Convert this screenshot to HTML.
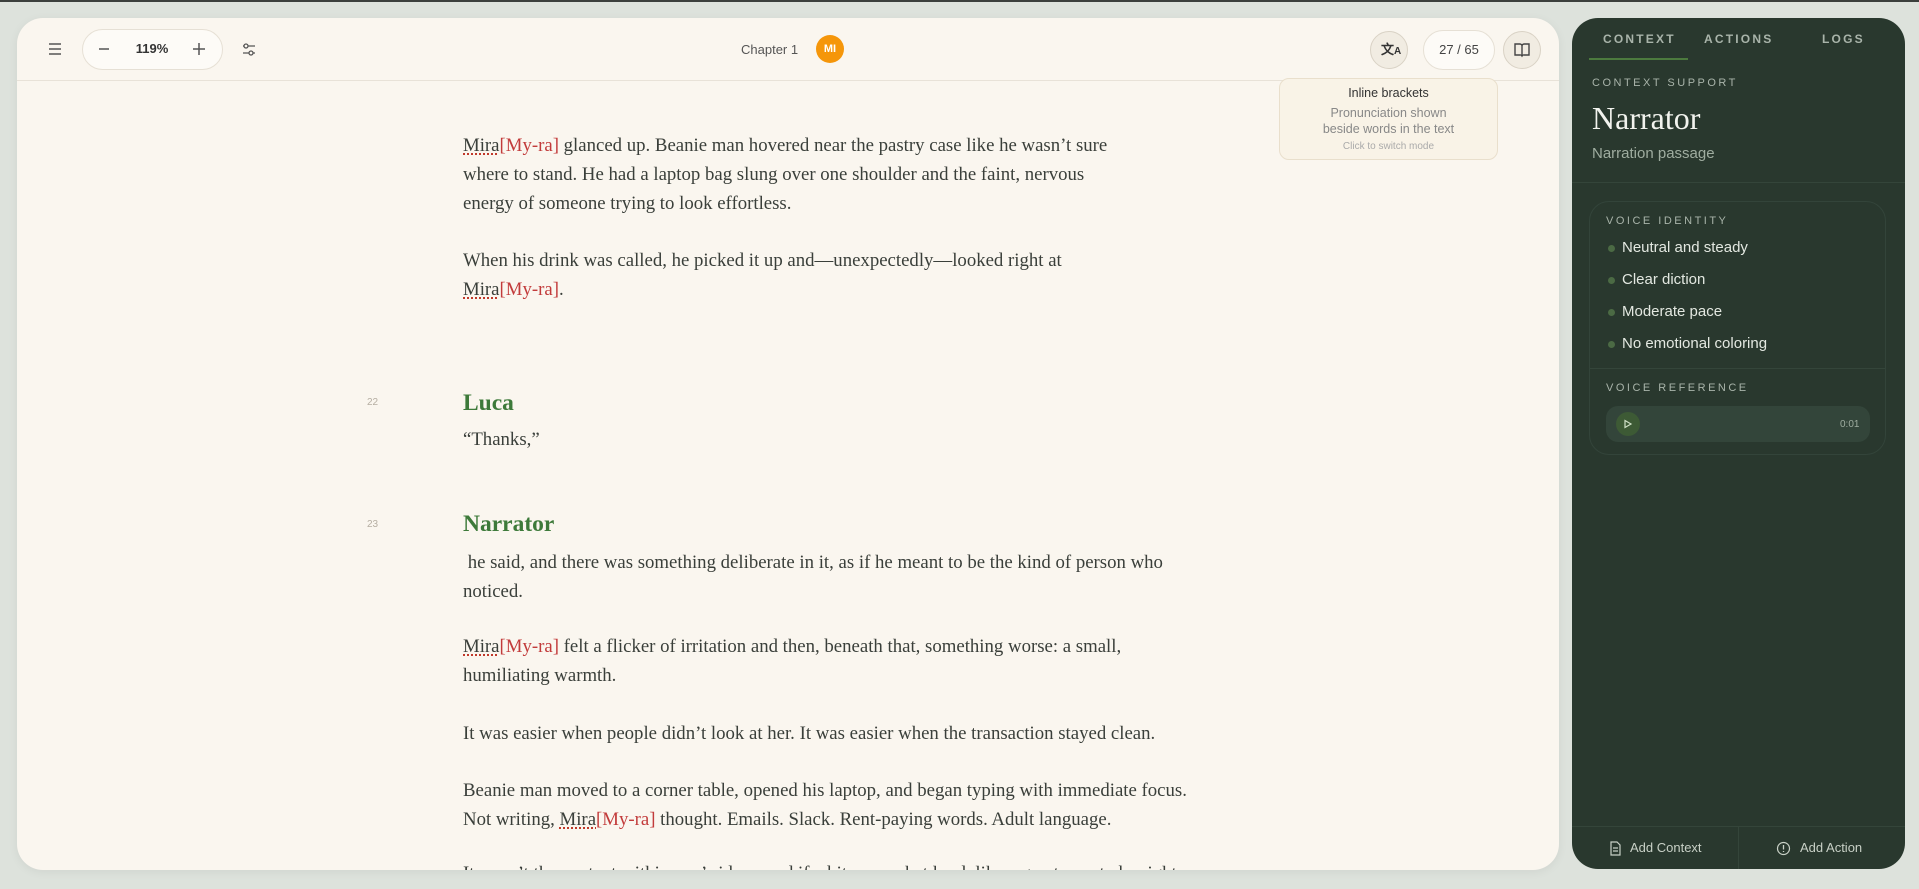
<!DOCTYPE html>
<html><head><meta charset="utf-8"><style>
*{box-sizing:border-box;margin:0;padding:0}
body{width:1919px;height:889px;overflow:hidden;background:#dde2dc;font-family:"Liberation Sans",sans-serif;position:relative}
.top{position:absolute;left:0;top:0;width:1919px;height:2px;background:#3b3f3c}
.card{position:absolute;left:17px;top:18px;width:1542px;height:852px;background:#faf6ef;border-radius:26px;overflow:hidden;box-shadow:0 2px 10px rgba(0,0,0,.06)}
.tb{position:absolute;left:0;top:0;width:100%;height:63px;border-bottom:1px solid #e8e2d8}
.abs{position:absolute}
.pill{position:absolute;border:1px solid #e6e0d5;background:#fdfbf7;border-radius:22px}
.circ{position:absolute;border:1px solid #d9d2c5;background:#f1ece2;border-radius:50%}
.p{position:absolute;left:446px;font-family:"Liberation Serif",serif;font-size:18.8px;line-height:28.8px;color:#3a3f3a;white-space:nowrap}
.m{text-decoration:underline dotted #c0392b;text-underline-offset:3px}
.r{color:#c23b3b}
.h{position:absolute;left:446px;font-family:"Liberation Serif",serif;font-weight:bold;font-size:23.5px;color:#3d7a3a}
.n{position:absolute;left:350px;font-size:10px;color:#b5aea2}
.panel{position:absolute;left:1572px;top:18px;width:333px;height:851px;background:#29382e;border-radius:26px;overflow:hidden;color:#e8ece6}
.tab{position:absolute;top:14px;font-size:12px;letter-spacing:2.2px;font-weight:bold;color:#a9b4aa}
.lab{position:absolute;font-size:11px;letter-spacing:2.5px;color:#a9b4aa}
.it{position:absolute;left:50px;font-size:15px;color:#e3e8e1}
.dot{position:absolute;left:-14px;top:6px;width:7px;height:7px;border-radius:50%;background:#4b6a44}
</style></head><body>
<div class="top"></div>
<div class="card">
 <div class="tb">
  <svg class="abs" style="left:30px;top:24px" width="16" height="14" viewBox="0 0 16 14"><path d="M2 2h12M2 7h12M2 12h12" stroke="#555" stroke-width="1.5"/></svg>
  <div class="pill" style="left:65px;top:11px;width:141px;height:41px"></div>
  <svg class="abs" style="left:80px;top:24px" width="14" height="14"><path d="M2 7h10" stroke="#555" stroke-width="1.5"/></svg>
  <div class="abs" style="left:110px;top:23px;width:50px;text-align:center;font-size:13px;font-weight:bold;color:#333">119%</div>
  <svg class="abs" style="left:175px;top:24px" width="14" height="14"><path d="M1 7h12M7 1v12" stroke="#555" stroke-width="1.5"/></svg>
  <svg class="abs" style="left:224px;top:24px" width="16" height="16" viewBox="0 0 16 16"><path d="M2 4h12M2 11h12" stroke="#555" stroke-width="1.3"/><circle cx="5" cy="4" r="2" fill="#faf6ef" stroke="#555" stroke-width="1.3"/><circle cx="10" cy="11" r="2" fill="#faf6ef" stroke="#555" stroke-width="1.3"/></svg>
  <div class="abs" style="left:724px;top:24px;font-size:13px;color:#555">Chapter 1</div>
  <div class="abs" style="left:799px;top:17px;width:28px;height:28px;border-radius:50%;background:#f5960a;color:#fff;font-size:11px;font-weight:bold;text-align:center;line-height:28px">MI</div>
  <div class="circ" style="left:1353px;top:13px;width:38px;height:38px"></div>
  <div class="abs" style="left:1364px;top:21px;font-size:13px;color:#333;font-weight:bold">文<span style="font-size:10px">A</span></div>
  <div class="pill" style="left:1406px;top:12px;width:72px;height:40px;text-align:center;line-height:38px;font-size:13px;color:#444">27 / 65</div>
  <div class="circ" style="left:1486px;top:13px;width:38px;height:38px"></div>
  <svg class="abs" style="left:1496px;top:23px" width="18" height="18" viewBox="0 0 18 18"><path d="M9 4v11M2 3h5a2 2 0 012 2 2 2 0 012-2h5v11h-5a2 2 0 00-2 1 2 2 0 00-2-1H2z" fill="none" stroke="#444" stroke-width="1.4"/></svg>
 </div>
 <div class="abs" style="left:1262px;top:60px;width:219px;height:82px;border:1px solid #e9dfcc;border-radius:10px;background:#f9f3e7;text-align:center">
  <div style="font-size:12.5px;color:#333;margin-top:7px">Inline brackets</div>
  <div style="font-size:12.5px;color:#888;line-height:16px;margin-top:5px">Pronunciation shown<br>beside words in the text</div>
  <div style="font-size:10px;color:#aaa;margin-top:4px">Click to switch mode</div>
 </div>
 <div class="p" style="top:114px"><span class="m">Mira</span><span class="r">[My-ra]</span> glanced up. Beanie man hovered near the pastry case like he wasn’t sure<br>where to stand. He had a laptop bag slung over one shoulder and the faint, nervous<br>energy of someone trying to look effortless.</div>
 <div class="p" style="top:229px">When his drink was called, he picked it up and—unexpectedly—looked right at<br><span class="m">Mira</span><span class="r">[My-ra]</span>.</div>
 <div class="n" style="top:379px">22</div>
 <div class="h" style="top:372px">Luca</div>
 <div class="p" style="top:408px">“Thanks,”</div>
 <div class="n" style="top:501px">23</div>
 <div class="h" style="top:493px">Narrator</div>
 <div class="p" style="top:531px">&nbsp;he said, and there was something deliberate in it, as if he meant to be the kind of person who<br>noticed.</div>
 <div class="p" style="top:615px"><span class="m">Mira</span><span class="r">[My-ra]</span> felt a flicker of irritation and then, beneath that, something worse: a small,<br>humiliating warmth.</div>
 <div class="p" style="top:702px">It was easier when people didn’t look at her. It was easier when the transaction stayed clean.</div>
 <div class="p" style="top:759px">Beanie man moved to a corner table, opened his laptop, and began typing with immediate focus.<br>Not writing, <span class="m">Mira</span><span class="r">[My-ra]</span> thought. Emails. Slack. Rent-paying words. Adult language.</div>
 <div class="p" style="top:842px">It wasn’t the content within one’s ideas, and if a bit somewhat loud, like a great way to be right</div>
</div>
<div class="panel">
 <div class="tab" style="left:31px">CONTEXT</div>
 <div class="tab" style="left:132px">ACTIONS</div>
 <div class="tab" style="left:250px">LOGS</div>
 <div class="abs" style="left:17px;top:40px;width:99px;height:2px;background:#4c7a3e"></div>
 <div class="lab" style="left:20px;top:59px">CONTEXT SUPPORT</div>
 <div class="abs" style="left:20px;top:82px;font-family:'Liberation Serif',serif;font-size:32px;color:#f2f3ee">Narrator</div>
 <div class="abs" style="left:20px;top:127px;font-size:15px;color:#9fada0">Narration passage</div>
 <div class="abs" style="left:0;top:164px;width:100%;height:1px;background:#34453a"></div>
 <div class="abs" style="left:17px;top:183px;width:297px;height:254px;border:1px solid #33443a;border-radius:20px"></div>
 <div class="lab" style="left:34px;top:197px">VOICE IDENTITY</div>
 <div class="it" style="top:221px"><span class="dot"></span>Neutral and steady</div>
 <div class="it" style="top:253px"><span class="dot"></span>Clear diction</div>
 <div class="it" style="top:285px"><span class="dot"></span>Moderate pace</div>
 <div class="it" style="top:317px"><span class="dot"></span>No emotional coloring</div>
 <div class="abs" style="left:18px;top:350px;width:295px;height:1px;background:#34453a"></div>
 <div class="lab" style="left:34px;top:364px">VOICE REFERENCE</div>
 <div class="abs" style="left:34px;top:388px;width:264px;height:36px;border-radius:12px;background:#33453a"></div>
 <div class="abs" style="left:44px;top:394px;width:24px;height:24px;border-radius:50%;background:#3d5a35"></div>
 <svg class="abs" style="left:51px;top:401px" width="10" height="10"><path d="M2 1.5l6 3.5-6 3.5z" fill="none" stroke="#cfe0c6" stroke-width="1.2"/></svg>
 <div class="abs" style="left:268px;top:401px;font-size:10px;color:#9fada0">0:01</div>
 <div class="abs" style="left:0;top:808px;width:100%;height:1px;background:#34453a"></div>
 <div class="abs" style="left:166px;top:808px;width:1px;height:43px;background:#34453a"></div>
 <svg class="abs" style="left:36px;top:823px" width="14" height="15" viewBox="0 0 14 15"><path d="M3 1h6l3 3v10H3z M5 7h5M5 10h5" fill="none" stroke="#c8d0c6" stroke-width="1.2"/></svg>
 <div class="abs" style="left:58px;top:822px;font-size:13px;color:#c8d0c6">Add Context</div>
 <svg class="abs" style="left:204px;top:823px" width="15" height="15" viewBox="0 0 15 15"><circle cx="7.5" cy="7.5" r="6" fill="none" stroke="#c8d0c6" stroke-width="1.2"/><path d="M7.5 4v4.5M7.5 10v1" stroke="#c8d0c6" stroke-width="1.3"/></svg>
 <div class="abs" style="left:228px;top:822px;font-size:13px;color:#c8d0c6">Add Action</div>
</div>
</body></html>
